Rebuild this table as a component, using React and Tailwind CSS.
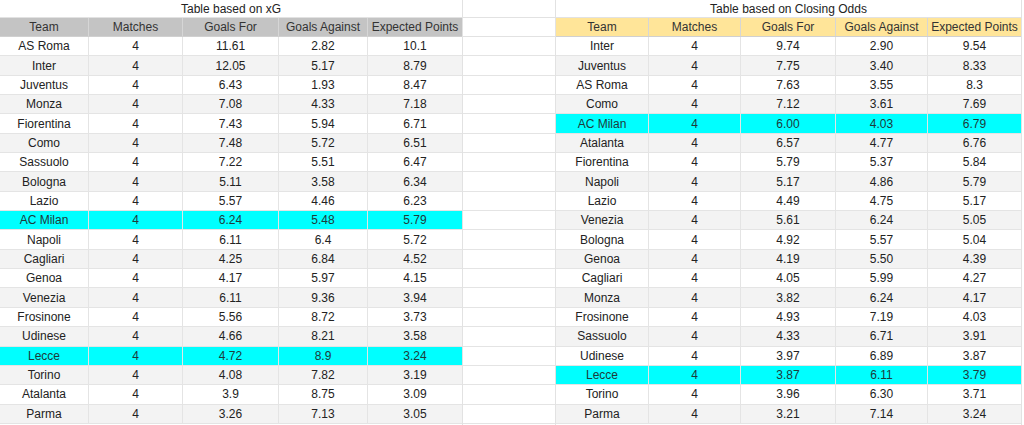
import React from "react";

const left = [
  ["AS Roma", "4", "11.61", "2.82", "10.1"],
  ["Inter", "4", "12.05", "5.17", "8.79"],
  ["Juventus", "4", "6.43", "1.93", "8.47"],
  ["Monza", "4", "7.08", "4.33", "7.18"],
  ["Fiorentina", "4", "7.43", "5.94", "6.71"],
  ["Como", "4", "7.48", "5.72", "6.51"],
  ["Sassuolo", "4", "7.22", "5.51", "6.47"],
  ["Bologna", "4", "5.11", "3.58", "6.34"],
  ["Lazio", "4", "5.57", "4.46", "6.23"],
  ["AC Milan", "4", "6.24", "5.48", "5.79", true],
  ["Napoli", "4", "6.11", "6.4", "5.72"],
  ["Cagliari", "4", "4.25", "6.84", "4.52"],
  ["Genoa", "4", "4.17", "5.97", "4.15"],
  ["Venezia", "4", "6.11", "9.36", "3.94"],
  ["Frosinone", "4", "5.56", "8.72", "3.73"],
  ["Udinese", "4", "4.66", "8.21", "3.58"],
  ["Lecce", "4", "4.72", "8.9", "3.24", true],
  ["Torino", "4", "4.08", "7.82", "3.19"],
  ["Atalanta", "4", "3.9", "8.75", "3.09"],
  ["Parma", "4", "3.26", "7.13", "3.05"],
];

const right = [
  ["Inter", "4", "9.74", "2.90", "9.54"],
  ["Juventus", "4", "7.75", "3.40", "8.33"],
  ["AS Roma", "4", "7.63", "3.55", "8.3"],
  ["Como", "4", "7.12", "3.61", "7.69"],
  ["AC Milan", "4", "6.00", "4.03", "6.79", true],
  ["Atalanta", "4", "6.57", "4.77", "6.76"],
  ["Fiorentina", "4", "5.79", "5.37", "5.84"],
  ["Napoli", "4", "5.17", "4.86", "5.79"],
  ["Lazio", "4", "4.49", "4.75", "5.17"],
  ["Venezia", "4", "5.61", "6.24", "5.05"],
  ["Bologna", "4", "4.92", "5.57", "5.04"],
  ["Genoa", "4", "4.19", "5.50", "4.39"],
  ["Cagliari", "4", "4.05", "5.99", "4.27"],
  ["Monza", "4", "3.82", "6.24", "4.17"],
  ["Frosinone", "4", "4.93", "7.19", "4.03"],
  ["Sassuolo", "4", "4.33", "6.71", "3.91"],
  ["Udinese", "4", "3.97", "6.89", "3.87"],
  ["Lecce", "4", "3.87", "6.11", "3.79", true],
  ["Torino", "4", "3.96", "6.30", "3.71"],
  ["Parma", "4", "3.21", "7.14", "3.24"],
];

const headers = ["Team", "Matches", "Goals For", "Goals Against", "Expected Points"];

function Table({ title, data, widths, headerBg, width }) {
  return (
    <div className="flex flex-col shrink-0 border-r border-[#e2e2e2]" style={{ width }}>
      <div className="h-[18px] flex items-center justify-center text-[12px] text-[#222] border-b border-[#e2e2e2]">
        {title}
      </div>
      <div className={`h-[19px] flex ${headerBg} border-b border-[#d0d0d0]`}>
        {headers.map((h, i) => (
          <div
            key={h}
            className={`flex items-center justify-center text-[12px] text-[#333] whitespace-nowrap ${i < 4 ? "border-r border-[#d6d6d6]" : ""}`}
            style={{ width: widths[i] }}
          >
            {h}
          </div>
        ))}
      </div>
      {data.map((row, r) => {
        const bg = row[5] ? "bg-[#00ffff]" : r % 2 === 1 ? "bg-[#f3f3f3]" : "bg-white";
        return (
          <div key={r} className={`h-[19.35px] flex ${bg} border-b border-[#e4e4e4]`}>
            {row.slice(0, 5).map((c, i) => (
              <div
                key={i}
                className={`flex items-center justify-center text-[12px] ${row[5] ? "text-[#1e3a3a]" : "text-[#222]"} ${i < 4 ? "border-r border-[#e4e4e4]" : ""}`}
                style={{ width: widths[i] }}
              >
                {c}
              </div>
            ))}
          </div>
        );
      })}
    </div>
  );
}

export default function App() {
  return (
    <div
      className="w-[1024px] h-[425px] bg-white overflow-hidden flex"
      style={{ fontFamily: '"Liberation Sans", Arial, sans-serif' }}
    >
      <Table
        title="Table based on xG"
        data={left}
        widths={[89, 94, 96, 89, 94]}
        headerBg="bg-[#c4c4c4]"
        width={463}
      />
      <div className="w-[93px] shrink-0 flex flex-col border-r border-[#e2e2e2]">
        <div className="h-[18px] border-b border-[#e2e2e2]" />
        <div className="h-[19px] border-b border-[#e2e2e2]" />
        {left.map((_, r) => (
          <div key={r} className="h-[19.35px] border-b border-[#e4e4e4]" />
        ))}
      </div>
      <Table
        title="Table based on Closing Odds"
        data={right}
        widths={[93, 92, 95, 92, 93]}
        headerBg="bg-[#ffe599]"
        width={466}
      />
      <div className="flex-1" />
    </div>
  );
}
